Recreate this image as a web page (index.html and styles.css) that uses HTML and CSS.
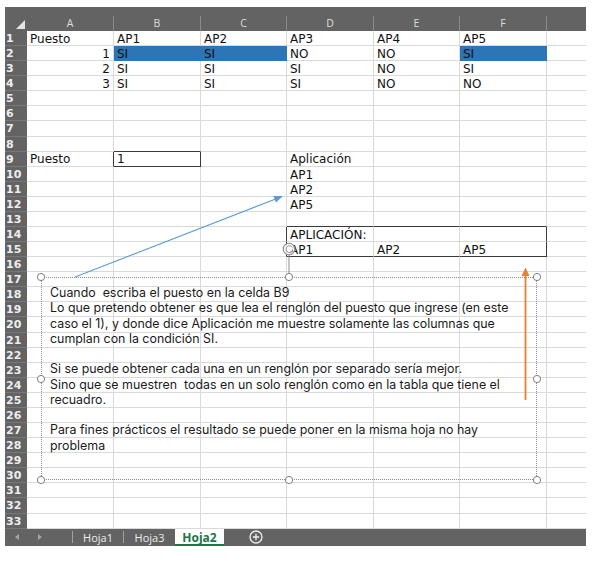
FILE: index.html
```html
<!DOCTYPE html>
<html lang="es">
<head>
<meta charset="utf-8">
<title>Hoja2</title>
<link rel="stylesheet" href="styles.css">
</head>
<body>
<div class="app">
  <div class="strip"></div>
  <div class="grid">
    <div class="corner"><span class="tri"></span></div>
    <div class="ch">A</div><div class="ch">B</div><div class="ch">C</div><div class="ch">D</div><div class="ch">E</div><div class="ch">F</div><div class="ch g"></div>

    <div class="rh">1</div><div class="c">Puesto</div><div class="c">AP1</div><div class="c">AP2</div><div class="c">AP3</div><div class="c">AP4</div><div class="c">AP5</div><div class="c g"></div>
    <div class="rh">2</div><div class="c n">1</div><div class="c sel">SI</div><div class="c sel">SI</div><div class="c">NO</div><div class="c">NO</div><div class="c sel">SI</div><div class="c g"></div>
    <div class="rh">3</div><div class="c n">2</div><div class="c">SI</div><div class="c">SI</div><div class="c">SI</div><div class="c">NO</div><div class="c">SI</div><div class="c g"></div>
    <div class="rh">4</div><div class="c n">3</div><div class="c">SI</div><div class="c">SI</div><div class="c">SI</div><div class="c">NO</div><div class="c">NO</div><div class="c g"></div>
    <div class="rh">5</div><div class="c"></div><div class="c"></div><div class="c"></div><div class="c"></div><div class="c"></div><div class="c"></div><div class="c g"></div>
    <div class="rh">6</div><div class="c"></div><div class="c"></div><div class="c"></div><div class="c"></div><div class="c"></div><div class="c"></div><div class="c g"></div>
    <div class="rh">7</div><div class="c"></div><div class="c"></div><div class="c"></div><div class="c"></div><div class="c"></div><div class="c"></div><div class="c g"></div>
    <div class="rh">8</div><div class="c"></div><div class="c db"></div><div class="c"></div><div class="c"></div><div class="c"></div><div class="c"></div><div class="c g"></div>
    <div class="rh">9</div><div class="c dr">Puesto</div><div class="c dr db">1</div><div class="c"></div><div class="c">Aplicación</div><div class="c"></div><div class="c"></div><div class="c g"></div>
    <div class="rh">10</div><div class="c"></div><div class="c"></div><div class="c"></div><div class="c">AP1</div><div class="c"></div><div class="c"></div><div class="c g"></div>
    <div class="rh">11</div><div class="c"></div><div class="c"></div><div class="c"></div><div class="c">AP2</div><div class="c"></div><div class="c"></div><div class="c g"></div>
    <div class="rh">12</div><div class="c"></div><div class="c"></div><div class="c"></div><div class="c">AP5</div><div class="c"></div><div class="c"></div><div class="c g"></div>
    <div class="rh">13</div><div class="c"></div><div class="c"></div><div class="c"></div><div class="c db"></div><div class="c db"></div><div class="c db"></div><div class="c g"></div>
    <div class="rh">14</div><div class="c"></div><div class="c"></div><div class="c dr"></div><div class="c">APLICACIÓN:</div><div class="c"></div><div class="c dr"></div><div class="c g"></div>
    <div class="rh">15</div><div class="c"></div><div class="c"></div><div class="c dr"></div><div class="c db">AP1</div><div class="c db">AP2</div><div class="c dr db">AP5</div><div class="c g"></div>
    <div class="rh">16</div><div class="c"></div><div class="c"></div><div class="c"></div><div class="c"></div><div class="c"></div><div class="c"></div><div class="c g"></div>
    <div class="rh">17</div><div class="c"></div><div class="c"></div><div class="c"></div><div class="c"></div><div class="c"></div><div class="c"></div><div class="c g"></div>
    <div class="rh">18</div><div class="c"></div><div class="c"></div><div class="c"></div><div class="c"></div><div class="c"></div><div class="c"></div><div class="c g"></div>
    <div class="rh">19</div><div class="c"></div><div class="c"></div><div class="c"></div><div class="c"></div><div class="c"></div><div class="c"></div><div class="c g"></div>
    <div class="rh">20</div><div class="c"></div><div class="c"></div><div class="c"></div><div class="c"></div><div class="c"></div><div class="c"></div><div class="c g"></div>
    <div class="rh">21</div><div class="c"></div><div class="c"></div><div class="c"></div><div class="c"></div><div class="c"></div><div class="c"></div><div class="c g"></div>
    <div class="rh">22</div><div class="c"></div><div class="c"></div><div class="c"></div><div class="c"></div><div class="c"></div><div class="c"></div><div class="c g"></div>
    <div class="rh">23</div><div class="c"></div><div class="c"></div><div class="c"></div><div class="c"></div><div class="c"></div><div class="c"></div><div class="c g"></div>
    <div class="rh">24</div><div class="c"></div><div class="c"></div><div class="c"></div><div class="c"></div><div class="c"></div><div class="c"></div><div class="c g"></div>
    <div class="rh">25</div><div class="c"></div><div class="c"></div><div class="c"></div><div class="c"></div><div class="c"></div><div class="c"></div><div class="c g"></div>
    <div class="rh">26</div><div class="c"></div><div class="c"></div><div class="c"></div><div class="c"></div><div class="c"></div><div class="c"></div><div class="c g"></div>
    <div class="rh">27</div><div class="c"></div><div class="c"></div><div class="c"></div><div class="c"></div><div class="c"></div><div class="c"></div><div class="c g"></div>
    <div class="rh">28</div><div class="c"></div><div class="c"></div><div class="c"></div><div class="c"></div><div class="c"></div><div class="c"></div><div class="c g"></div>
    <div class="rh">29</div><div class="c"></div><div class="c"></div><div class="c"></div><div class="c"></div><div class="c"></div><div class="c"></div><div class="c g"></div>
    <div class="rh">30</div><div class="c"></div><div class="c"></div><div class="c"></div><div class="c"></div><div class="c"></div><div class="c"></div><div class="c g"></div>
    <div class="rh">31</div><div class="c"></div><div class="c"></div><div class="c"></div><div class="c"></div><div class="c"></div><div class="c"></div><div class="c g"></div>
    <div class="rh">32</div><div class="c"></div><div class="c"></div><div class="c"></div><div class="c"></div><div class="c"></div><div class="c"></div><div class="c g"></div>
    <div class="rh">33</div><div class="c"></div><div class="c"></div><div class="c"></div><div class="c"></div><div class="c"></div><div class="c"></div><div class="c g"></div>
  </div>
  <div class="tabbar">
    <div class="nav"><span class="arr-l"></span><span class="arr-r"></span></div>
    <span class="sep"></span>
    <div class="tab t1">Hoja1</div>
    <span class="sep"></span>
    <div class="tab t3">Hoja3</div>
    <div class="tab active">Hoja2</div>
    <svg class="plus" width="14" height="14" viewBox="0 0 14 14"><circle cx="7" cy="7" r="6" fill="none" stroke="#f0f0f0" stroke-width="1.3"/><path d="M7 3.8V10.2M3.8 7H10.2" stroke="#f0f0f0" stroke-width="1.3"/></svg>
  </div>
</div>

<div class="textbox">
  <div class="ln">Cuando&nbsp; escriba el puesto en la celda B9</div>
  <div class="ln">Lo que pretendo obtener es que lea el renglón del puesto que ingrese (en este</div>
  <div class="ln">caso el 1), y donde dice Aplicación me muestre solamente las columnas que</div>
  <div class="ln">cumplan con la condición SI.</div>
  <div class="ln"></div>
  <div class="ln">Si se puede obtener cada una en un renglón por separado sería mejor.</div>
  <div class="ln">Sino que se muestren&nbsp; todas en un solo renglón como en la tabla que tiene el</div>
  <div class="ln">recuadro.</div>
  <div class="ln"></div>
  <div class="ln">Para fines prácticos el resultado se puede poner en la misma hoja no hay</div>
  <div class="ln">problema</div>
</div>

<svg class="overlay" width="600" height="563" viewBox="0 0 600 563">
  <line x1="75" y1="277" x2="275" y2="199.3" stroke="#5b9bd5" stroke-width="1.1"/>
  <polygon points="283,196 275.9,202.6 273.3,196" fill="#5b9bd5"/>
  <line x1="525.5" y1="400" x2="525.5" y2="275" stroke="#ed7d31" stroke-width="1.8"/>
  <polygon points="525.5,267.5 521.5,276 529.5,276" fill="#ed7d31"/>
  <line x1="289" y1="255" x2="289" y2="277" stroke="#8c8c8c" stroke-width="1"/>
  <circle cx="289" cy="249" r="5.8" fill="#fff" fill-opacity="0.85" stroke="#8c8c8c" stroke-width="1.1"/>
  <path d="M292.2 251.2 A3.4 3.4 0 1 1 292.4 247.4" fill="none" stroke="#8c8c8c" stroke-width="1"/>
  <path d="M290.6 251.6 L292.6 251.6 L292.6 249.6" fill="none" stroke="#8c8c8c" stroke-width="1"/>
  <g fill="#fff" stroke="#808080" stroke-width="1">
    <circle cx="41" cy="277" r="3.6"/>
    <circle cx="289" cy="277" r="3.6"/>
    <circle cx="537" cy="277" r="3.6"/>
    <circle cx="41" cy="379" r="3.6"/>
    <circle cx="537" cy="379" r="3.6"/>
    <circle cx="41" cy="480" r="3.6"/>
    <circle cx="289" cy="480" r="3.6"/>
    <circle cx="537" cy="480" r="3.6"/>
  </g>
</svg>
</body>
</html>
```

FILE: styles.css
```css
html, body {
  margin: 0;
  padding: 0;
}
body {
  background: #ffffff;
  position: relative;
  width: 600px;
  height: 563px;
  overflow: hidden;
}
.app {
  margin: 7px 0 0 5px;
  width: 581px;
}
.strip {
  height: 9px;
  background: #636363;
}
.grid {
  display: grid;
  grid-template-columns: 22px 87px 87px 86px 87px 86px 87px 39px;
  grid-template-rows: 15px repeat(33, 15.09px);
}
.corner {
  background: #636363;
  position: relative;
}
.tri {
  position: absolute;
  right: 2px;
  bottom: 2px;
  width: 0;
  height: 0;
  border-left: 9px solid transparent;
  border-bottom: 9px solid #e4e4e4;
}
.ch {
  background: #636363;
  color: #dedede;
  font: 10.5px/15px "Open Sans", "DejaVu Sans", sans-serif;
  text-align: center;
  border-right: 1px solid #8a8a8a;
  box-sizing: border-box;
}
.ch.g {
  border-right: none;
}
.rh {
  background: #636363;
  color: #ededed;
  font: bold 11px/15px "DejaVu Sans", sans-serif;
  padding-left: 1px;
  border-bottom: 1px solid #787878;
  box-sizing: border-box;
  white-space: nowrap;
  overflow: hidden;
}
.c {
  border-right: 1px solid #dadada;
  border-bottom: 1px solid #dadada;
  box-sizing: border-box;
  font: 12px/14px "DejaVu Sans", sans-serif;
  color: #111111;
  padding: 0.8px 0 0 3px;
  white-space: nowrap;
  min-width: 0;
}
.c.g {
  border-right: none;
}
.c.n {
  text-align: right;
  padding-right: 3px;
}
.c.sel {
  background: #2e75b6;
  border-color: #2e75b6;
}
.c.dr {
  border-right-color: #3a3a3a;
}
.c.db {
  border-bottom-color: #3a3a3a;
}
.tabbar {
  height: 17px;
  background: #636363;
  display: flex;
  align-items: stretch;
}
.nav {
  width: 67px;
  display: flex;
  align-items: center;
}
.arr-l {
  margin-left: 10px;
  width: 0;
  height: 0;
  border-top: 3.5px solid transparent;
  border-bottom: 3.5px solid transparent;
  border-right: 4px solid #a5a5a5;
}
.arr-r {
  margin-left: 19px;
  width: 0;
  height: 0;
  border-top: 3.5px solid transparent;
  border-bottom: 3.5px solid transparent;
  border-left: 4px solid #a5a5a5;
}
.sep {
  width: 1px;
  height: 12px;
  align-self: center;
  background: #a0a0a0;
}
.tab {
  font: 11px/17px "Open Sans", "DejaVu Sans", sans-serif;
  color: #ececec;
  text-align: center;
}
.t1 {
  width: 50px;
}
.t3 {
  width: 51px;
}
.tab.active {
  width: 49px;
  background: #ffffff;
  color: #217346;
  font-weight: bold;
  font-size: 12px;
  box-shadow: inset 0 -2px 0 #217346;
}
.plus {
  align-self: center;
  margin-left: 25px;
}
.textbox {
  position: absolute;
  left: 41px;
  top: 277px;
  width: 496px;
  height: 203px;
  box-sizing: border-box;
  border: 1px dotted #8c8c8c;
  padding: 7px 0 0 8px;
  font: 12.4px/15.25px Inter, "Open Sans", sans-serif;
  color: #1a1a1a;
}
.ln {
  height: 15.25px;
  white-space: nowrap;
}
.overlay {
  position: absolute;
  left: 0;
  top: 0;
  pointer-events: none;
}
```
